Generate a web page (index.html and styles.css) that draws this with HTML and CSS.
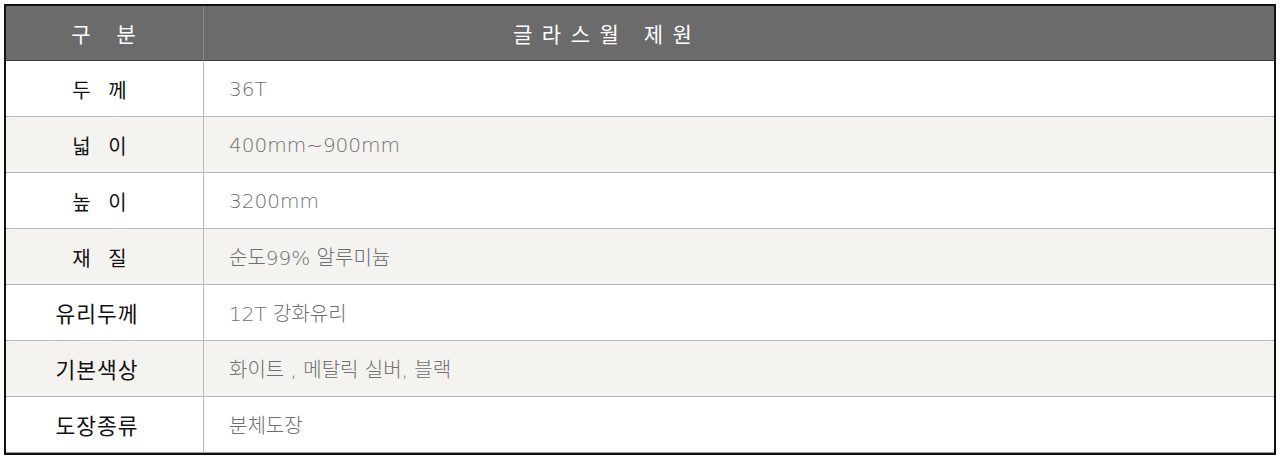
FILE: index.html
```html
<!DOCTYPE html>
<html lang="ko">
<head>
<meta charset="utf-8">
<title>글라스월 제원</title>
<link rel="stylesheet" href="styles.css">
</head>
<body>
<div class="wrap">
<table class="spec">
  <thead>
    <tr>
      <th class="h-label"><span class="sp-h">구 분</span></th>
      <th class="h-value">글라스월 제원</th>
    </tr>
  </thead>
  <tbody>
    <tr><td class="label"><span class="sp">두 께</span></td><td class="value">36T</td></tr>
    <tr class="alt"><td class="label"><span class="sp">넓 이</span></td><td class="value">400mm~900mm</td></tr>
    <tr><td class="label"><span class="sp">높 이</span></td><td class="value">3200mm</td></tr>
    <tr class="alt"><td class="label"><span class="sp">재 질</span></td><td class="value">순도99% 알루미늄</td></tr>
    <tr><td class="label"><span class="wide">유리두께</span></td><td class="value">12T 강화유리</td></tr>
    <tr class="alt"><td class="label"><span class="wide">기본색상</span></td><td class="value">화이트 , 메탈릭 실버, 블랙</td></tr>
    <tr class="last"><td class="label"><span class="wide">도장종류</span></td><td class="value">분체도장</td></tr>
  </tbody>
</table>
</div>
</body>
</html>
```
FILE: styles.css
```css
html, body {
  margin: 0;
  padding: 0;
  background: #ffffff;
}
.wrap {
  padding: 4px;
}
.spec {
  width: 1272px;
  border-collapse: separate;
  border-spacing: 0;
  border: 2px solid #111111;
  font-family: "Noto Sans CJK KR", "Noto Sans", sans-serif;
}
.spec th {
  height: 54px;
  padding: 0;
  background: #6b6b6b;
  color: #ffffff;
  font-size: 21px;
  font-weight: 400;
  border-bottom: 1px solid #3c3c3c;
}
.h-label {
  width: 198px;
  border-right: 1px solid #8a8a8a;
  text-align: center;
  box-sizing: border-box;
  padding-right: 2px !important;
}
.sp-h {
  letter-spacing: 10px;
  margin-right: -10px;
}
.h-value {
  text-align: left;
  padding-left: 309px !important;
  letter-spacing: 9.5px;
}
.spec td {
  height: 55px;
  padding: 0;
  border-bottom: 1px solid #b9b9b9;
}
.spec tr.last td {
  border-bottom: 1px solid #9a9a9a;
}
.spec tr.alt td {
  background: #f4f3ef;
}
.label {
  width: 198px;
  border-right: 1px solid #b9b9b9;
  text-align: center;
  padding-right: 16px !important;
  box-sizing: border-box;
  font-size: 21px;
  color: #111111;
}
.sp {
  font-size: 20px;
  letter-spacing: 6px;
  margin-right: -12px;
}
.wide {
  font-size: 21.5px;
  letter-spacing: 1px;
  margin-right: -1px;
}
.value {
  padding-left: 25px !important;
  font-family: "DejaVu Sans", "Noto Sans CJK KR", sans-serif;
  font-weight: 200;
  font-size: 20px;
  color: #6f6f6f;
}
```
